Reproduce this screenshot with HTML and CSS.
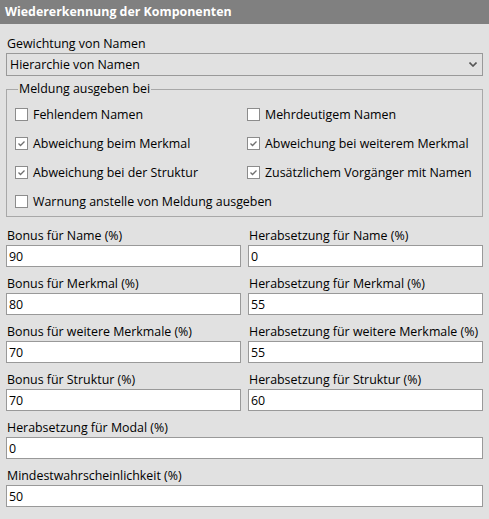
FILE: index.html
```html
<!DOCTYPE html>
<html lang="de">
<head>
<meta charset="utf-8">
<link rel="stylesheet" href="styles.css">
</head>
<body>
<div class="header">Wiedererkennung der Komponenten</div>
<div class="content">
  <div class="label">Gewichtung von Namen</div>
  <div class="select">
    <span class="select-text">Hierarchie von Namen</span>
    <svg class="chev" width="8" height="5" viewBox="0 0 8 5"><path d="M0.5 0.5 L4 4 L7.5 0.5" fill="none" stroke="#555" stroke-width="1.6"/></svg>
  </div>
  <fieldset class="group">
    <legend>Meldung ausgeben bei</legend>
    <div class="checks">
      <div class="check"><span class="box"></span>Fehlendem Namen</div>
      <div class="check"><span class="box"></span>Mehrdeutigem Namen</div>
      <div class="check"><span class="box"><svg width="11" height="11" viewBox="0 0 11 11"><path d="M2.5 5.5 L4.5 7.5 L8.5 3.5" fill="none" stroke="#707070" stroke-width="1.3"/></svg></span>Abweichung beim Merkmal</div>
      <div class="check"><span class="box"><svg width="11" height="11" viewBox="0 0 11 11"><path d="M2.5 5.5 L4.5 7.5 L8.5 3.5" fill="none" stroke="#707070" stroke-width="1.3"/></svg></span>Abweichung bei weiterem Merkmal</div>
      <div class="check"><span class="box"><svg width="11" height="11" viewBox="0 0 11 11"><path d="M2.5 5.5 L4.5 7.5 L8.5 3.5" fill="none" stroke="#707070" stroke-width="1.3"/></svg></span>Abweichung bei der Struktur</div>
      <div class="check"><span class="box"><svg width="11" height="11" viewBox="0 0 11 11"><path d="M2.5 5.5 L4.5 7.5 L8.5 3.5" fill="none" stroke="#707070" stroke-width="1.3"/></svg></span>Zusätzlichem Vorgänger mit Namen</div>
      <div class="check wide"><span class="box"></span>Warnung anstelle von Meldung ausgeben</div>
    </div>
  </fieldset>
  <div class="fields">
    <div class="field"><div class="label">Bonus für Name (%)</div><input class="input" value="90"></div>
    <div class="field"><div class="label">Herabsetzung für Name (%)</div><input class="input" value="0"></div>
    <div class="field"><div class="label">Bonus für Merkmal (%)</div><input class="input" value="80"></div>
    <div class="field"><div class="label">Herabsetzung für Merkmal (%)</div><input class="input" value="55"></div>
    <div class="field"><div class="label">Bonus für weitere Merkmale (%)</div><input class="input" value="70"></div>
    <div class="field"><div class="label">Herabsetzung für weitere Merkmale (%)</div><input class="input" value="55"></div>
    <div class="field"><div class="label">Bonus für Struktur (%)</div><input class="input" value="70"></div>
    <div class="field"><div class="label">Herabsetzung für Struktur (%)</div><input class="input" value="60"></div>
    <div class="field wide"><div class="label">Herabsetzung für Modal (%)</div><input class="input" value="0"></div>
    <div class="field wide"><div class="label">Mindestwahrscheinlichkeit (%)</div><input class="input" value="50"></div>
  </div>
</div>
</body>
</html>
```

FILE: styles.css
```css
html, body {
  margin: 0;
  padding: 0;
  background: #e1e1e1;
  font-family: "Open Sans", "Noto Sans", "Liberation Sans", sans-serif;
  font-size: 12.4px;
  color: #000;
}
.header {
  height: 24px;
  line-height: 24px;
  background: #808080;
  color: #fff;
  font-weight: bold;
  font-size: 12.4px;
  padding-left: 5px;
}
.content {
  padding: 0 6px;
}
.label {
  line-height: 16px;
  height: 16px;
  white-space: nowrap;
}
.content > .label {
  margin-top: 12px;
  padding-left: 1px;
}
.select {
  margin-top: 1px;
  height: 23px;
  box-sizing: border-box;
  border: 1px solid #999;
  display: flex;
  align-items: center;
  justify-content: space-between;
  padding: 0 5px 0 3px;
}
.chev { display: block; }
.group {
  margin: 5px 0 0 0;
  padding: 3px 0 0 8px;
  border: 1px solid #a8a8a8;
  min-width: 0;
}
.group legend {
  padding: 0 1px;
  margin-left: 3px;
  line-height: 16px;
}
.checks {
  display: grid;
  grid-template-columns: 232px 1fr;
  grid-auto-rows: 29px;
}
.check {
  display: flex;
  align-items: center;
  white-space: nowrap;
}
.check.wide { grid-column: 1 / -1; }
.box {
  width: 13px;
  height: 13px;
  box-sizing: border-box;
  border: 1px solid #8c8c8c;
  background: #fff;
  margin-right: 5px;
  display: flex;
  align-items: center;
  justify-content: center;
}
.box svg { display: block; }
.fields {
  margin-top: 11px;
  display: grid;
  grid-template-columns: 235px 235px;
  column-gap: 7px;
  row-gap: 9px;
}
.field .label { margin-bottom: 1px; padding-left: 1px; }
.field.wide { grid-column: 1 / -1; }
.input {
  display: block;
  width: 100%;
  height: 22px;
  box-sizing: border-box;
  border: 1px solid #999;
  background: #fff;
  font: inherit;
  padding: 0 2px;
  margin: 0;
  color: #000;
  outline: none;
}
```
